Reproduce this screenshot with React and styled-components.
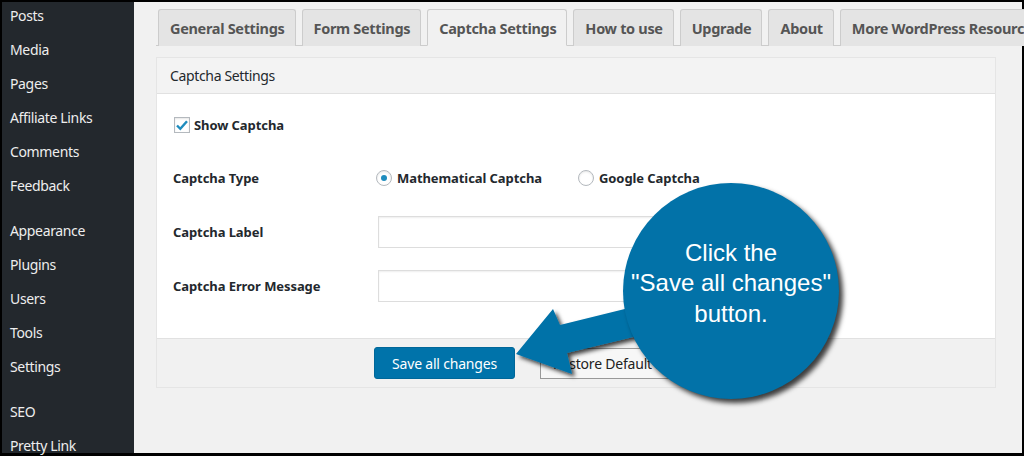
import React from "react";
import styled, { createGlobalStyle } from "styled-components";

const GlobalStyle = createGlobalStyle`
  html, body { margin: 0; padding: 0; background: #000; }
  * { box-sizing: border-box; }
  body { font-family: "Noto Sans", "Open Sans", sans-serif; }
`;

const Frame = styled.div`
  position: relative;
  width: 1024px;
  height: 456px;
  background: #000;
  padding: 2px 2px 3px 2px;
  overflow: hidden;
`;

const Screen = styled.div`
  display: flex;
  height: 100%;
`;

const Sidebar = styled.nav`
  width: 132px;
  flex: none;
  background: #23282d;
  display: flex;
  flex-direction: column;
`;

const MenuGroup = styled.div`
  display: flex;
  flex-direction: column;
  margin-bottom: 11px;
`;

const MenuItem = styled.div`
  height: 34px;
  line-height: 28px;
  padding: 0 0 6px 8px;
  color: #eee;
  font-size: 14px;
  letter-spacing: -0.35px;
  white-space: nowrap;
`;

const Main = styled.main`
  flex: 1;
  background: #f1f1f1;
  padding: 7px 26px 0 22px;
  display: flex;
  flex-direction: column;
  min-width: 0;
`;

const TabBar = styled.div`
  display: flex;
  gap: 6px;
  padding-left: 2px;
  border-bottom: 1px solid #ccc;
  margin-right: -26px;
  height: 37px;
  white-space: nowrap;
`;

const Tab = styled.div`
  height: 37px;
  padding: 0 10px 0 11px;
  display: flex;
  align-items: center;
  border: 1px solid #ccc;
  border-bottom: ${(p) => (p.$active ? "1px solid #f1f1f1" : "none")};
  border-radius: 3px 3px 0 0;
  background: ${(p) => (p.$active ? "#f1f1f1" : "#e4e4e4")};
  color: #555;
  font-weight: 700;
  font-size: 14.5px;
  letter-spacing: -0.32px;
  flex: none;
`;

const Panel = styled.section`
  margin-top: 11px;
  border: 1px solid #e5e5e5;
  background: #fff;
`;

const PanelHeader = styled.div`
  height: 36px;
  background: #f3f3f3;
  border-bottom: 1px solid #e1e1e1;
  display: flex;
  align-items: center;
  padding-left: 13px;
  font-size: 14px;
  letter-spacing: -0.35px;
  color: #23282d;
`;

const PanelBody = styled.div`
  padding: 19px 16px 25px 16px;
`;

const CheckRow = styled.label`
  height: 24px;
  display: flex;
  align-items: center;
  gap: 4px;
  padding-left: 1px;
`;

const Box = styled.span`
  width: 16px;
  height: 16px;
  border: 1px solid #b4b9be;
  background: #fff;
  display: flex;
  align-items: center;
  justify-content: center;
  box-shadow: inset 0 1px 2px rgba(0, 0, 0, 0.1);
`;

const BoldText = styled.span`
  font-weight: 700;
  font-size: 13px;
  letter-spacing: -0.08px;
  color: #23282d;
`;

const FormRow = styled.div`
  display: grid;
  grid-template-columns: 205px 1fr;
  align-items: center;
  height: 54px;
  &:first-of-type { margin-top: 14px; }
`;

const RadioGroup = styled.div`
  display: flex;
  align-items: center;
  gap: 36px;
  margin-left: -2px;
`;

const RadioOption = styled.label`
  display: flex;
  align-items: center;
  gap: 5px;
`;

const RadioDot = styled.span`
  width: 16px;
  height: 16px;
  border-radius: 50%;
  border: 1px solid #b4b9be;
  background: #fff;
  display: flex;
  align-items: center;
  justify-content: center;
  box-shadow: inset 0 1px 2px rgba(0, 0, 0, 0.1);
  &::after {
    content: "";
    width: 6px;
    height: 6px;
    border-radius: 50%;
    background: ${(p) => (p.$checked ? "#1e8cbe" : "transparent")};
  }
`;

const TextInput = styled.input`
  width: 350px;
  height: 32px;
  border: 1px solid #ddd;
  background: #fff;
  box-shadow: inset 0 1px 2px rgba(0, 0, 0, 0.07);
  font-family: inherit;
  font-size: 14px;
`;

const PanelFooter = styled.div`
  background: #f1f1f1;
  border-top: 1px solid #e1e1e1;
  height: 49px;
  display: flex;
  align-items: center;
  gap: 25px;
  padding-left: 217px;
`;

const PrimaryButton = styled.button`
  height: 32px;
  width: 141px;
  background: #0073aa;
  border: 1px solid #006799;
  border-radius: 3px;
  color: #fff;
  font-family: inherit;
  font-size: 14px;
  letter-spacing: -0.2px;
  padding: 0;
`;

const SecondaryButton = styled.button`
  height: 31px;
  padding: 0 12px;
  background: #f7f7f7;
  border: 1px solid #999;
  border-radius: 0;
  color: #222;
  font-family: inherit;
  font-size: 14px;
  letter-spacing: -0.2px;
`;

const ArrowLayer = styled.svg`
  position: absolute;
  left: 0;
  top: 0;
  pointer-events: none;
`;

const Bubble = styled.div`
  position: absolute;
  left: 623px;
  top: 183px;
  width: 216px;
  height: 216px;
  border-radius: 50%;
  background: #0272a8;
  box-shadow: 4px 4px 5px rgba(0, 0, 0, 0.75);
  display: flex;
  flex-direction: column;
  align-items: center;
  justify-content: center;
  padding-bottom: 15px;
  color: #fff;
  font-family: "Liberation Sans", Arial, sans-serif;
  font-size: 24px;
  line-height: 30.5px;
  text-align: center;
  white-space: nowrap;
`;

const menu = [
  ["Posts", "Media", "Pages", "Affiliate Links", "Comments", "Feedback"],
  ["Appearance", "Plugins", "Users", "Tools", "Settings"],
  ["SEO", "Pretty Link"],
];

const tabs = [
  "General Settings",
  "Form Settings",
  "Captcha Settings",
  "How to use",
  "Upgrade",
  "About",
  "More WordPress Resources",
];

export default function App() {
  return (
    <>
      <GlobalStyle />
      <Frame>
        <Screen>
          <Sidebar>
            {menu.map((g, i) => (
              <MenuGroup key={i}>
                {g.map((m) => (
                  <MenuItem key={m}>{m}</MenuItem>
                ))}
              </MenuGroup>
            ))}
          </Sidebar>
          <Main>
            <TabBar>
              {tabs.map((t) => (
                <Tab key={t} $active={t === "Captcha Settings"}>
                  {t}
                </Tab>
              ))}
            </TabBar>
            <Panel>
              <PanelHeader>Captcha Settings</PanelHeader>
              <PanelBody>
                <CheckRow>
                  <Box>
                    <svg width="14" height="14" viewBox="0 0 14 14">
                      <path d="M2 7.5 L5.3 10.8 L12 3.2" fill="none" stroke="#1e8cbe" strokeWidth="2.4" />
                    </svg>
                  </Box>
                  <BoldText>Show Captcha</BoldText>
                </CheckRow>
                <div>
                  <FormRow>
                    <BoldText>Captcha Type</BoldText>
                    <RadioGroup>
                      <RadioOption>
                        <RadioDot $checked />
                        <BoldText>Mathematical Captcha</BoldText>
                      </RadioOption>
                      <RadioOption>
                        <RadioDot />
                        <BoldText>Google Captcha</BoldText>
                      </RadioOption>
                    </RadioGroup>
                  </FormRow>
                  <FormRow>
                    <BoldText>Captcha Label</BoldText>
                    <TextInput type="text" />
                  </FormRow>
                  <FormRow>
                    <BoldText>Captcha Error Message</BoldText>
                    <TextInput type="text" />
                  </FormRow>
                </div>
              </PanelBody>
              <PanelFooter>
                <PrimaryButton>Save all changes</PrimaryButton>
                <SecondaryButton>Restore Default Settings</SecondaryButton>
              </PanelFooter>
            </Panel>
          </Main>
        </Screen>
        <ArrowLayer width="1024" height="456" viewBox="0 0 1024 456">
          <defs>
            <filter id="sh" x="-20%" y="-20%" width="150%" height="150%">
              <feDropShadow dx="3" dy="3" stdDeviation="2" floodColor="#000" floodOpacity="0.75" />
            </filter>
          </defs>
          <path
            d="M516 354 L553 309 L560 325 L645 304 L650 333 L567 353 L572 374 Z"
            fill="#0272a8"
            filter="url(#sh)"
          />
        </ArrowLayer>
        <Bubble>
          <div>Click the</div>
          <div>"Save all changes"</div>
          <div>button.</div>
        </Bubble>
      </Frame>
    </>
  );
}
